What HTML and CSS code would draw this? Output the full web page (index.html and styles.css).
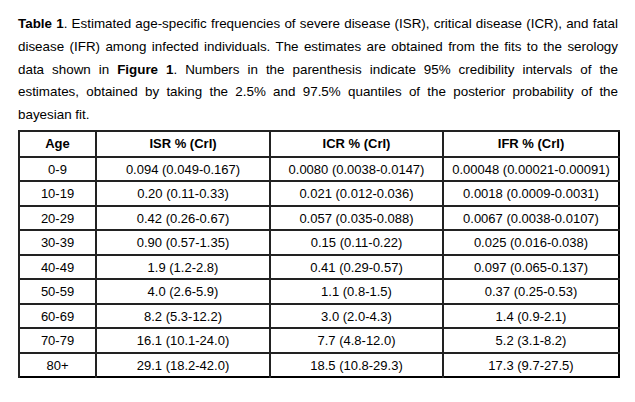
FILE: index.html
```html
<!DOCTYPE html>
<html>
<head>
<meta charset="utf-8">
<link rel="stylesheet" href="styles.css">
</head>
<body>
<div class="page">
  <p class="caption"><b>Table 1</b>. Estimated age-specific frequencies of severe disease (ISR), critical disease (ICR), and fatal disease (IFR) among infected individuals. The estimates are obtained from the fits to the serology data shown in <b>Figure 1</b>. Numbers in the parenthesis indicate 95% credibility intervals of the estimates, obtained by taking the 2.5% and 97.5% quantiles of the posterior probability of the bayesian fit.</p>
  <table class="data">
    <colgroup>
      <col class="c-age"><col class="c-isr"><col class="c-icr"><col class="c-ifr">
    </colgroup>
    <thead>
      <tr class="head"><th>Age</th><th>ISR % (CrI)</th><th>ICR % (CrI)</th><th>IFR % (CrI)</th></tr>
    </thead>
    <tbody>
      <tr><td>0-9</td><td>0.094 (0.049-0.167)</td><td>0.0080 (0.0038-0.0147)</td><td>0.00048 (0.00021-0.00091)</td></tr>
      <tr><td>10-19</td><td>0.20 (0.11-0.33)</td><td>0.021 (0.012-0.036)</td><td>0.0018 (0.0009-0.0031)</td></tr>
      <tr><td>20-29</td><td>0.42 (0.26-0.67)</td><td>0.057 (0.035-0.088)</td><td>0.0067 (0.0038-0.0107)</td></tr>
      <tr><td>30-39</td><td>0.90 (0.57-1.35)</td><td>0.15 (0.11-0.22)</td><td>0.025 (0.016-0.038)</td></tr>
      <tr><td>40-49</td><td>1.9 (1.2-2.8)</td><td>0.41 (0.29-0.57)</td><td>0.097 (0.065-0.137)</td></tr>
      <tr><td>50-59</td><td>4.0 (2.6-5.9)</td><td>1.1 (0.8-1.5)</td><td>0.37 (0.25-0.53)</td></tr>
      <tr><td>60-69</td><td>8.2 (5.3-12.2)</td><td>3.0 (2.0-4.3)</td><td>1.4 (0.9-2.1)</td></tr>
      <tr><td>70-79</td><td>16.1 (10.1-24.0)</td><td>7.7 (4.8-12.0)</td><td>5.2 (3.1-8.2)</td></tr>
      <tr><td>80+</td><td>29.1 (18.2-42.0)</td><td>18.5 (10.8-29.3)</td><td>17.3 (9.7-27.5)</td></tr>
    </tbody>
  </table>
</div>
</body>
</html>
```
FILE: styles.css
```css
html, body {
  margin: 0;
  padding: 0;
  background: #ffffff;
}
body {
  font-family: "Liberation Sans", Arial, sans-serif;
  font-size: 13px;
  color: #000;
}
.page {
  padding: 13px 17px 0 18px;
  width: 600px;
}
.caption {
  margin: 0;
  font-size: 13.4px;
  line-height: 22.8px;
  text-align: justify;
}
.caption b {
  font-weight: bold;
}
.data {
  margin-top: 3px;
  width: 600px;
  border-collapse: collapse;
  border: 2px solid #000;
  table-layout: fixed;
}
.c-age { width: 77px; }
.c-isr { width: 174px; }
.c-icr { width: 173px; }
.c-ifr { width: 176px; }
.data th, .data td {
  border-top: 2px solid #222;
  border-left: 2px solid #222;
  padding: 0;
  text-align: center;
  vertical-align: middle;
  height: 22.5px;
  line-height: 15px;
}
.data th {
  font-weight: bold;
  height: 24px;
}
```
